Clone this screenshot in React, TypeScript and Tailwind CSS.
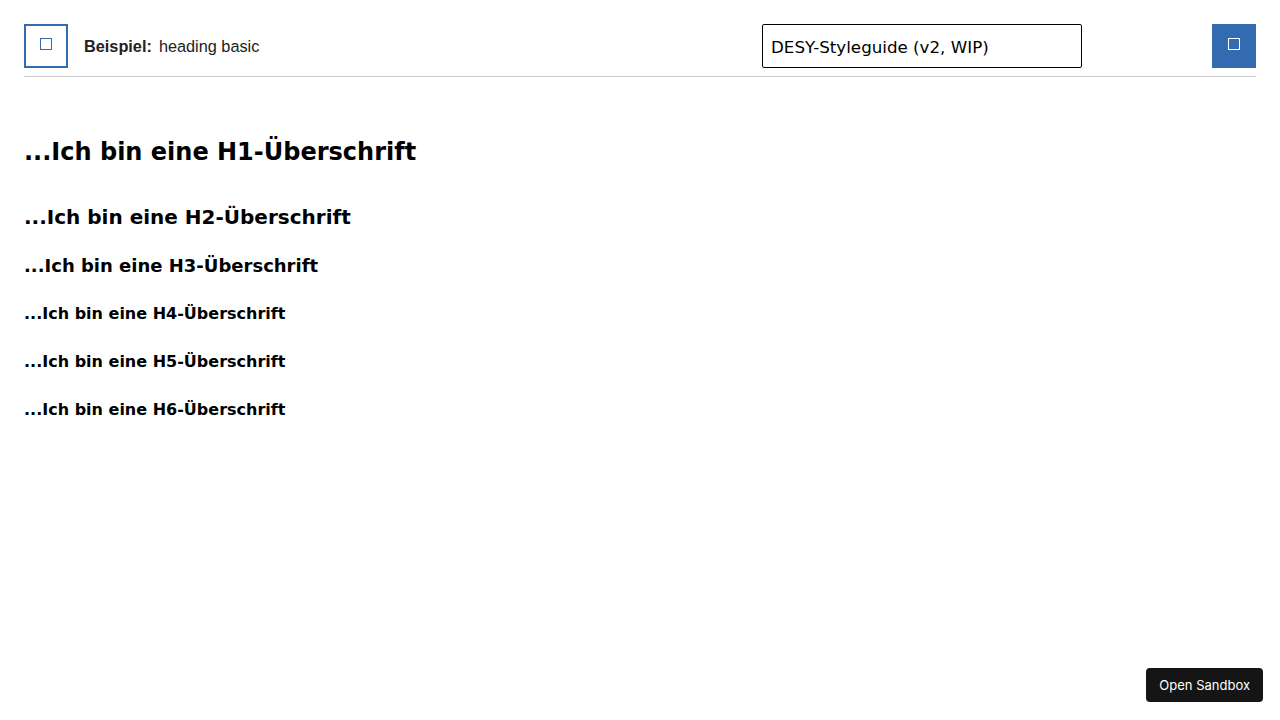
import React from 'react';

const headings = [
    { tag: 'h1', label: 'H1', cls: 'text-[24px] mt-[61px]' },
    { tag: 'h2', label: 'H2', cls: 'text-[20px] mt-[38px]' },
    { tag: 'h3', label: 'H3', cls: 'text-[18px] mt-[26px]' },
    { tag: 'h4', label: 'H4', cls: 'text-[16px] mt-[28px]' },
    { tag: 'h5', label: 'H5', cls: 'text-[16px] mt-[28px]' },
    { tag: 'h6', label: 'H6', cls: 'text-[16px] mt-[29px]' },
];

export default function App() {
    return (
        <div className="min-h-screen bg-white px-6 pt-6">
            {/* Toolbar */}
            <div className="flex items-center border-b border-[#cccccc] pb-2">
                <button className="w-11 h-11 border-2 border-[#336bb0] flex items-center justify-center">
                    <span className="block w-[12px] h-[12px] border border-[#336bb0] -mt-[4px]" />
                </button>
                <div className="ml-4 mt-[1px] text-[16.3px] text-[#222] font-['Liberation_Sans',Arial,sans-serif]">
                    <span className="font-bold">Beispiel:</span>
                    <span className="ml-[7px]">heading basic</span>
                </div>
                <div className="ml-auto w-[320px] h-11 border border-black rounded-[2px] flex items-center px-2 pt-[3px] text-[16.7px] text-black font-['DejaVu_Sans',Verdana,sans-serif]">
                    DESY-Styleguide (v2, WIP)
                </div>
                <button className="ml-[130px] w-11 h-11 bg-[#336bb0] flex items-center justify-center">
                    <span className="block w-[12px] h-[12px] border border-white -mt-[4px]" />
                </button>
            </div>

            {/* Headings */}
            <div className="font-['DejaVu_Sans',Verdana,sans-serif] font-bold text-black">
                {headings.map((h) => {
                    const Tag = h.tag as 'h1';
                    return (
                        <Tag key={h.label} className={`leading-[1.2] ${h.cls}`}>
                            ...Ich bin eine {h.label}-Überschrift
                        </Tag>
                    );
                })}
            </div>

            <button className="fixed right-[17px] bottom-[18px] h-[34px] px-[13px] pt-[2px] rounded-[4px] bg-[#151515] text-white text-[13px] font-['Inter',sans-serif]">
                Open Sandbox
            </button>
        </div>
    );
}
